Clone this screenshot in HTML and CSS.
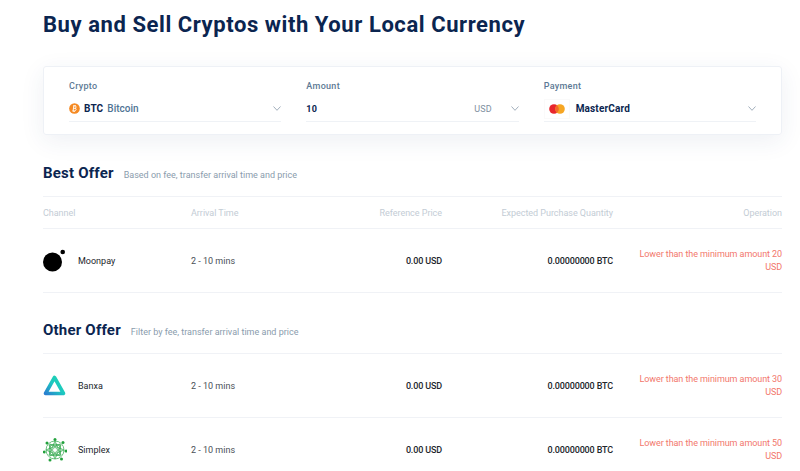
FILE: index.html
```html
<!DOCTYPE html>
<html lang="en">
<head>
  <meta charset="UTF-8" />
  <meta name="viewport" content="width=device-width, initial-scale=1.0"/>
  <title>Buy and Sell Cryptos</title>
  <link rel="stylesheet" href="styles.css">
</head>
<body>
  <div class="pagina">
    <h1 class="titulo">Buy and Sell Cryptos with Your Local Currency</h1>

    <!-- form card -->
    <div class="tarjeta">
      <div class="campo">
        <div class="etiqueta">Crypto</div>
        <div class="valor">
          <svg class="icono-btc" viewBox="0 0 12 12" width="11" height="11">
            <circle cx="6" cy="6" r="5.8" fill="#f58a23"/>
            <path d="M4.6 3.2 H6.8 Q8 3.4 7.7 4.6 Q7.5 5.5 6.6 5.7 Q8 5.9 7.7 7.3 Q7.4 8.6 6 8.6 H3.9 M5.3 3.2 L4.4 8.6 M4.9 5.8 H6.6 M5.6 2.3 L5.4 3.2 M7 2.4 L6.8 3.2 M4.8 8.6 L4.6 9.6 M6.2 8.6 L6 9.6" fill="none" stroke="#fff" stroke-width="1"/>
          </svg>
          <b class="fuerte">BTC</b>
          <span class="nombre">Bitcoin</span>
          <svg class="flecha" viewBox="0 0 8 5" width="8" height="5"><path d="M.5.5 4 4.3 7.5.5" fill="none" stroke="#8a9bab" stroke-width=".8"/></svg>
        </div>
      </div>
      <div class="campo">
        <div class="etiqueta">Amount</div>
        <div class="valor">
          <b class="fuerte cantidad">10</b>
          <span class="moneda">USD</span>
          <svg class="flecha-moneda" viewBox="0 0 8 5" width="8" height="5"><path d="M.5.5 4 4.3 7.5.5" fill="none" stroke="#8a9bab" stroke-width=".8"/></svg>
        </div>
      </div>
      <div class="campo">
        <div class="etiqueta">Payment</div>
        <div class="valor">
          <span class="caja-mc">
            <svg viewBox="0 0 16 10" width="16" height="10">
              <circle cx="5" cy="5" r="4.8" fill="#e8262d"/>
              <circle cx="11" cy="5" r="4.8" fill="#f6a623"/>
              <path d="M8 1.2 A4.8 4.8 0 0 1 8 8.8 A4.8 4.8 0 0 1 8 1.2" fill="#f2682a"/>
            </svg>
          </span>
          <b class="fuerte">MasterCard</b>
          <svg class="flecha" viewBox="0 0 8 5" width="8" height="5"><path d="M.5.5 4 4.3 7.5.5" fill="none" stroke="#8a9bab" stroke-width=".8"/></svg>
        </div>
      </div>
    </div>

    <!-- best offer -->
    <div class="seccion seccion-mejor">
      <h2>Best Offer</h2>
      <span>Based on fee, transfer arrival time and price</span>
    </div>
    <div class="fila cabecera">
      <div>Channel</div>
      <div>Arrival Time</div>
      <div class="der">Reference Price</div>
      <div class="der">Expected Purchase Quantity</div>
      <div class="der">Operation</div>
    </div>
    <div class="fila oferta">
      <div class="canal">
        <svg class="logo" viewBox="0 0 24 24" width="24" height="24">
          <circle cx="9.5" cy="13" r="9.5" fill="#000"/>
          <circle cx="19.7" cy="3" r="2.3" fill="#000"/>
        </svg>
        Moonpay
      </div>
      <div>2 - 10 mins</div>
      <div class="der fuerte-fila">0.00 USD</div>
      <div class="der fuerte-fila">0.00000000 BTC</div>
      <div class="der aviso">Lower than the minimum amount 20 USD</div>
    </div>

    <!-- other offers -->
    <div class="seccion seccion-otra">
      <h2>Other Offer</h2>
      <span>Filter by fee, transfer arrival time and price</span>
    </div>
    <div class="fila oferta primera">
      <div class="canal">
        <svg class="logo" viewBox="0 0 24 24" width="24" height="24">
          <defs>
            <linearGradient id="grad-banxa" x1="0" y1="1" x2="1" y2="0">
              <stop offset="0" stop-color="#2a7fd0"/>
              <stop offset=".5" stop-color="#1cc8c0"/>
              <stop offset="1" stop-color="#1fd4b0"/>
            </linearGradient>
          </defs>
          <path d="M11.5 3.5 20.5 19.5H2.5Z" fill="none" stroke="url(#grad-banxa)" stroke-width="3.6" stroke-linejoin="round"/>
        </svg>
        Banxa
      </div>
      <div>2 - 10 mins</div>
      <div class="der fuerte-fila">0.00 USD</div>
      <div class="der fuerte-fila">0.00000000 BTC</div>
      <div class="der aviso">Lower than the minimum amount 30 USD</div>
    </div>
    <div class="fila oferta">
      <div class="canal">
        <svg class="logo" viewBox="0 0 24 24" width="24" height="24">
          <g fill="#22a13c">
            <circle cx="12" cy="1.5" r="1.5"/><circle cx="20" cy="4.5" r="1.5"/>
            <circle cx="23" cy="13" r="1.5"/><circle cx="18.5" cy="21" r="1.5"/>
            <circle cx="7" cy="22" r="1.5"/><circle cx="1.2" cy="14" r="1.5"/>
            <circle cx="4" cy="5" r="1.5"/>
          </g>
          <g fill="none" stroke="#2fa64a" stroke-width=".7">
            <circle cx="12" cy="12" r="9"/>
            <circle cx="12" cy="12" r="6"/>
            <circle cx="12" cy="12" r="2.5"/>
            <path d="M12 3 18 17H6ZM12 21 6 7H18ZM3 12 17 6V18ZM21 12 7 18V6Z"/>
          </g>
        </svg>
        Simplex
      </div>
      <div>2 - 10 mins</div>
      <div class="der fuerte-fila">0.00 USD</div>
      <div class="der fuerte-fila">0.00000000 BTC</div>
      <div class="der aviso">Lower than the minimum amount 50 USD</div>
    </div>
  </div>
</body>
</html>
```

FILE: styles.css
```css
* {
  box-sizing: border-box;
  margin: 0;
  padding: 0;
}

body, html {
  height: 100%;
  overflow: hidden;
  background: #fff;
  font-family: Roboto, 'Liberation Sans', sans-serif;
}

.pagina {
  padding: 0 18px 0 43px;
}

.titulo {
  font-size: 22px;
  line-height: 28px;
  padding-top: 11px;
  margin-bottom: 27px;
  font-weight: 700;
  letter-spacing: 0.57px;
  color: #0b2550;
}

.tarjeta {
  display: flex;
  gap: 25px;
  height: 69px;
  padding: 13px 25px 0 25px;
  border: 1px solid #eef1f6;
  border-radius: 3px;
  box-shadow: 0 6px 24px rgba(40, 70, 120, 0.08);
}

.campo {
  flex: 1;
}

.etiqueta {
  font-size: 9px;
  line-height: 13px;
  letter-spacing: 0.3px;
  font-weight: 500;
  color: #5d7a95;
  margin-bottom: 5px;
}

.valor {
  display: flex;
  align-items: center;
  height: 24px;
  padding-bottom: 2px;
  border-bottom: 1px solid #eff2f6;
  font-size: 10px;
  letter-spacing: 0.15px;
}

.icono-btc {
  margin-right: 4px;
}

.fuerte {
  font-weight: 700;
  color: #0b2550;
}

.nombre {
  margin-left: 4px;
  font-weight: 500;
  letter-spacing: 0;
  color: #4f7394;
}

.flecha {
  margin-left: auto;
  margin-right: 0;
}

.cantidad {
  font-size: 9px;
}

.moneda {
  margin-left: auto;
  font-size: 9px;
  letter-spacing: 0.1px;
  color: #7e8fa0;
}

.flecha-moneda {
  margin-left: 19px;
}

.caja-mc {
  display: flex;
  align-items: center;
  justify-content: center;
  width: 26px;
  height: 20px;
  margin-right: 6px;
  border: 1px solid #fafafa;
}

.seccion {
  display: flex;
  align-items: baseline;
  height: 24px;
  color: #8a9cad;
  font-size: 9px;
}

.seccion h2 {
  font-size: 15px;
  line-height: 24px;
  font-weight: 700;
  letter-spacing: 0.2px;
  color: #0b2550;
}

.seccion-mejor {
  margin-top: 26px;
  margin-bottom: 11px;
}

.seccion-mejor span {
  margin-left: 10px;
}

.seccion-otra {
  margin-top: 25px;
  margin-bottom: 11px;
}

.seccion-otra span {
  margin-left: 10px;
}

.fila {
  display: grid;
  grid-template-columns: 148px 110px 141px 171px 169px;
  align-items: center;
  font-size: 9px;
  border-bottom: 1px solid #f0f2f6;
}

.der {
  text-align: right;
}

.cabecera {
  height: 33px;
  border-top: 1px solid #f0f2f6;
  color: #c3ccd5;
  letter-spacing: -0.03px;
}

.oferta {
  height: 64px;
  color: #4a4f57;
}

.primera {
  border-top: 1px solid #f0f2f6;
  height: 65px;
}

.canal {
  display: flex;
  align-items: center;
  gap: 11px;
  color: #22262c;
}

.fuerte-fila {
  font-weight: 500;
  letter-spacing: -0.15px;
  color: #22262c;
}

.aviso {
  line-height: 13px;
  letter-spacing: -0.08px;
  color: #f2776c;
  padding-left: 15px;
}
```
